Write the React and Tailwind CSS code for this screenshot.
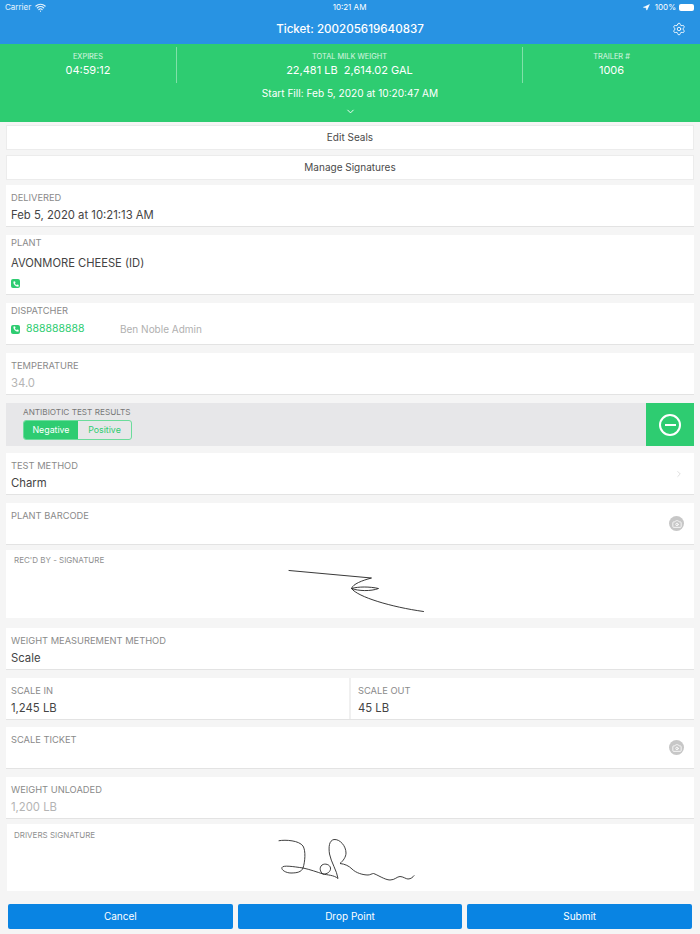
import React from 'react';
import { ChevronDown, ChevronRight, Settings, Navigation, Wifi, Phone, Camera } from 'lucide-react';

const PhoneBadge = () => (
  <span className="flex h-[9px] w-[9px] items-center justify-center rounded-[2px] bg-[#2ecc71]">
    <Phone size={6} className="text-white" fill="white" strokeWidth={1} />
  </span>
);

const CameraBadge = () => (
  <span className="flex h-[15px] w-[15px] items-center justify-center rounded-full bg-[#c7c7c7]">
    <Camera size={10} className="text-white" strokeWidth={2} />
  </span>
);

const Label = ({ children }) => (
  <div className="text-[9.3px] leading-[14px] text-[#8a8a8a]">{children}</div>
);

const Card = ({ children, className = '' }) => (
  <div className={`border-b border-[#e3e3e3] bg-white ${className}`}>{children}</div>
);

const Value = ({ children, muted }) => (
  <div className={`mt-[2px] text-[11.3px] leading-[16px] ${muted ? 'text-[#b4b4b4]' : 'text-[#444]'}`}>{children}</div>
);

const Field = ({ label, value, muted, right, mt = 'mt-2' }) => (
  <Card className={`${mt} flex h-[42px] items-center justify-between pr-[10px] pl-[5px]`}>
    <div className="self-start pt-[6px]">
      <Label>{label}</Label>
      <Value muted={muted}>{value}</Value>
    </div>
    {right}
  </Card>
);

const ActionRow = ({ children, mt }) => (
  <div className={`${mt} flex h-[25px] items-center justify-center border border-[#ececec] bg-white text-[10px] text-[#4a4a4a]`}>
    {children}
  </div>
);

const Stat = ({ label, value, className }) => (
  <div className={`flex h-9 flex-col items-center pt-[5px] ${className}`}>
    <div className="text-[7.4px] leading-[10px] text-white/80">{label}</div>
    <div className="mt-[1px] text-[11px] leading-[14px] whitespace-pre text-white">{value}</div>
  </div>
);

const SignatureOne = () => (
  <svg viewBox="0 0 688 68" className="col-start-1 row-start-1 h-[68px] w-[688px]" fill="none" stroke="#222" strokeWidth="0.9" strokeLinecap="round" strokeLinejoin="round">
    <path d="M283 20.5 L365.5 28 C356 30.5 347 34 345.5 38.5 C352 36.5 364 36.5 372.5 38.5 C365 41.5 352 41 345.5 38.5 C352 47 385 57 417.5 61.5" />
  </svg>
);

const SignatureTwo = () => (
  <svg viewBox="0 0 687 67" className="col-start-1 row-start-1 h-[67px] w-[687px]" fill="none" stroke="#2a2a2a" strokeWidth="0.9" strokeLinecap="round" strokeLinejoin="round">
    <path d="M272 16.7 C279 15.5 292 16.5 296 22 C299 27 298 38 296 44 C294.5 48 290 49 284 49 C279 49 274 46 275 43.5 C276 41 286 42.5 296 44 C303 45.5 310 48 316 50 C320 50.5 324 47.5 323.5 44 C323 40.5 318 39 315 41 C312 43.5 313 48 316 50 C320 51 327 51 331 54.5 C330 47 324 38 322.5 30 C321.5 23 322 16.5 327 15.5 C333 15 339 22 339 29 C339 33 336 37 333 39.5 C338 40 342 42 345 45 C349 49 356 51 361 51 C363 51 365 49.5 366.5 49.5 C370 50.5 378 56 383 56 C388 56 390 52.5 393 52.5 C396 52.5 399 55 401 55 C404 55 406 53 407 51.7" />
  </svg>
);

const Footer = () => (
  <div className="flex h-[43px] gap-[5px] bg-[#f5f5f5] px-2 pt-[13px]">
    {['Cancel', 'Drop Point', 'Submit'].map((t) => (
      <button key={t} type="button" className="h-[25px] flex-1 rounded-[2px] bg-[#0984e3] text-[10px] text-white">
        {t}
      </button>
    ))}
  </div>
);

export default function App() {
  return (
    <div className="h-[934px] w-[700px] overflow-hidden bg-[#f5f5f5] font-['Inter',sans-serif]">
      <header className="h-11 bg-[#2893e3] text-white">
        <div className="flex h-[14px] items-center justify-between pr-[6px] pl-[5px] text-[8px]">
          <div className="flex w-[120px] items-center gap-1 text-white/90">
            Carrier <Wifi size={11} strokeWidth={2.5} />
          </div>
          <div>10:21 AM</div>
          <div className="flex w-[120px] items-center justify-end gap-[3px]">
            <Navigation size={7} fill="white" />
            <span className="ml-[2px]">100%</span>
            <span className="h-[7px] w-[15px] rounded-[2px] bg-white" />
          </div>
        </div>
        <div className="relative flex h-[30px] items-center justify-center pt-px text-[11.6px] font-medium">
          Ticket: 200205619640837
          <Settings size={14} strokeWidth={1.5} className="absolute top-[8px] right-[14px]" />
        </div>
      </header>

      <section className="h-[78px] bg-[#2ecc71] pt-[3px] text-white">
        <div className="flex">
          <Stat label="EXPIRES" value="04:59:12" className="w-[177px] border-r border-white/40" />
          <Stat label="TOTAL MILK WEIGHT" value="22,481 LB  2,614.02 GAL" className="w-[346px] border-r border-white/40" />
          <Stat label="TRAILER #" value="1006" className="flex-1" />
        </div>
        <div className="mt-[3px] text-center text-[10.1px] leading-[14px]">Start Fill: Feb 5, 2020 at 10:20:47 AM</div>
        <div className="mt-[6px] flex justify-center">
          <ChevronDown size={11} strokeWidth={2} />
        </div>
      </section>

      <main className="h-[769px] overflow-hidden px-[6px] pt-[3px]">
        <ActionRow>Edit Seals</ActionRow>
        <ActionRow mt="mt-[5px]">Manage Signatures</ActionRow>

        <Field mt="mt-[5px]" label="DELIVERED" value="Feb 5, 2020 at 10:21:13 AM" />

        <Card className="mt-2 h-[60px] pt-[1px] pl-[5px]">
          <Label>PLANT</Label>
          <div className="mt-[5px] text-[11.2px] leading-[16px] text-[#444]">AVONMORE CHEESE (ID)</div>
          <div className="mt-[8px]"><PhoneBadge /></div>
        </Card>

        <Card className="mt-2 h-[42px] pt-[1px] pl-[5px]">
          <Label>DISPATCHER</Label>
          <div className="mt-[4px] flex items-center text-[10.5px] leading-[14px]">
            <PhoneBadge />
            <span className="ml-[6px] w-[94px] text-[#2ecc71]">888888888</span>
            <span className="text-[10px] text-[#b0b0b0]">Ben Noble Admin</span>
          </div>
        </Card>

        <Field label="TEMPERATURE" value="34.0" muted />

        <div className="mt-2 flex h-[43px] items-stretch bg-[#e7e7e9]">
          <div className="flex-1 pt-[3px] pl-[17px]">
            <div className="text-[8.2px] leading-[12px] text-[#777]">ANTIBIOTIC TEST RESULTS</div>
            <div className="mt-[2px] flex h-5 w-[109px] overflow-hidden rounded-[3px] border border-[#6bdc9b] text-[8.8px]">
              <span className="flex w-[54px] items-center justify-center bg-[#2ecc71] text-white">Negative</span>
              <span className="flex flex-1 items-center justify-center text-[#2ecc71]">Positive</span>
            </div>
          </div>
          <div className="flex w-12 items-center justify-center bg-[#2ecc71]">
            <span className="flex h-[22px] w-[22px] items-center justify-center rounded-full border-2 border-white">
              <span className="h-[2px] w-[11px] bg-white" />
            </span>
          </div>
        </div>

        <Field mt="mt-[7px]" label="TEST METHOD" value="Charm" right={<ChevronRight size={10} className="text-[#d8d8d8]" />} />
        <Field label="PLANT BARCODE" value="" right={<CameraBadge />} />

        <div className="mt-[5px] grid h-[68px] bg-white">
          <div className="col-start-1 row-start-1 pt-[4px] pl-2 text-[8px] leading-[12px] text-[#8f8f8f]">REC'D BY - SIGNATURE</div>
          <SignatureOne />
        </div>

        <Field mt="mt-[10px]" label="WEIGHT MEASUREMENT METHOD" value="Scale" />

        <Card className="mt-2 flex h-[42px]">
          <div className="w-[345px] border-r-2 border-[#f0f0f0] pt-[6px] pl-[5px]">
            <Label>SCALE IN</Label>
            <Value>1,245 LB</Value>
          </div>
          <div className="flex-1 pt-[6px] pl-[7px]">
            <Label>SCALE OUT</Label>
            <Value>45 LB</Value>
          </div>
        </Card>

        <Field mt="mt-[7px]" label="SCALE TICKET" value="" right={<CameraBadge />} />
        <Field label="WEIGHT UNLOADED" value="1,200 LB" muted />

        <div className="mt-[5px] ml-px grid h-[67px] bg-white">
          <div className="col-start-1 row-start-1 pt-[5px] pl-[7px] text-[8px] leading-[12px] text-[#8f8f8f]">DRIVERS SIGNATURE</div>
          <SignatureTwo />
        </div>
      </main>
      <Footer />
    </div>
  );
}
